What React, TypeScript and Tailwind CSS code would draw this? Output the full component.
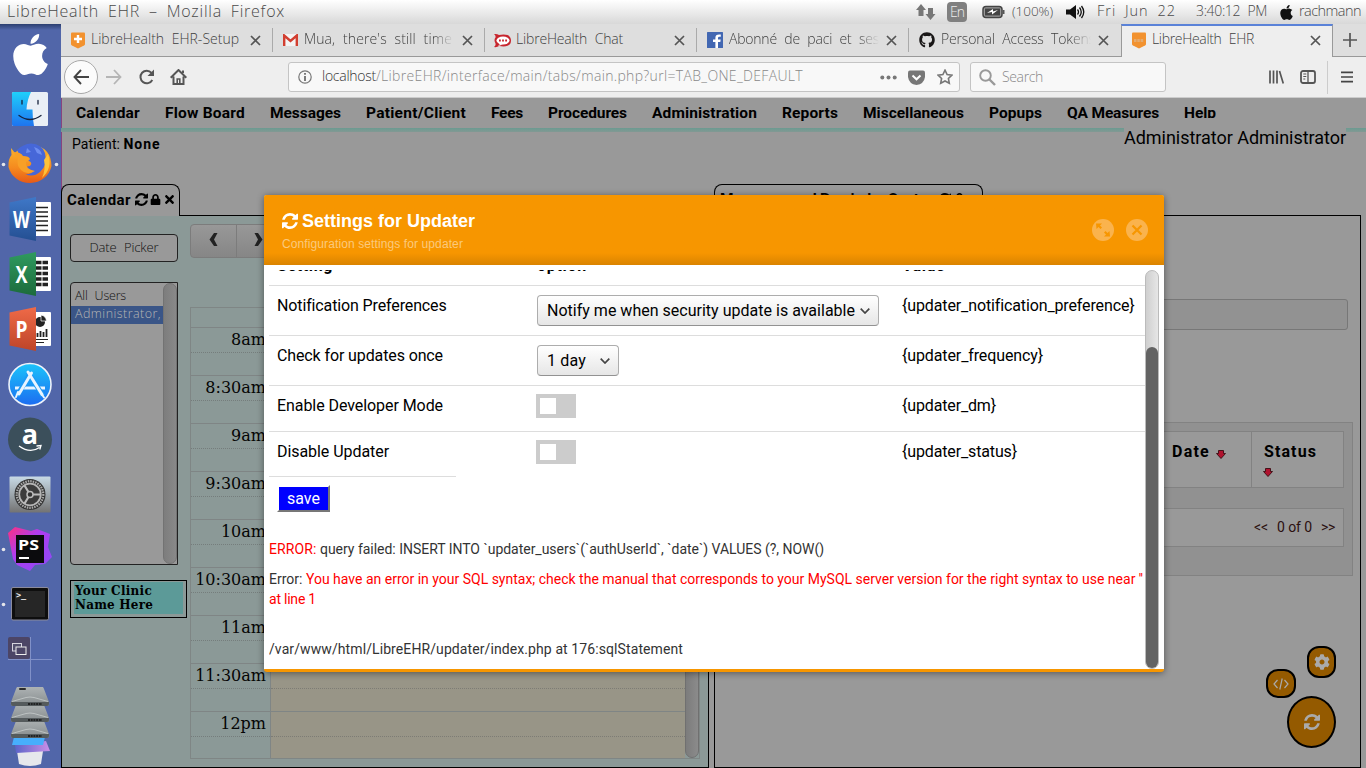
import React, { useLayoutEffect, useRef } from "react";
import { FaApple, FaLock, FaTimes, FaCog, FaGithub } from "react-icons/fa";

/* Text whose letter spacing is adjusted so that it fills the given width. */
function Fit({ w, className = "", children }: { w: number; className?: string; children: string }) {
  const ref = useRef<HTMLSpanElement>(null);
  useLayoutEffect(() => {
    const el = ref.current;
    if (!el) return;
    el.style.letterSpacing = "0px";
    const natural = el.getBoundingClientRect().width;
    el.style.letterSpacing = `${(w - natural) / children.length}px`;
  }, [w, children]);
  return (
    <span ref={ref} className={`inline-block shrink-0 whitespace-pre ${className}`}>
      {children}
    </span>
  );
}

const hand = "font-['Open_Sans','Noto_Sans',sans-serif] font-light [word-spacing:4px]";

function Refresh({ className = "" }: { className?: string }) {
  return (
    <svg viewBox="0 0 1536 1536" fill="currentColor" className={className}>
      <path d="M1511 928q0 5-1 7-64 268-268 434.500t-478 166.500q-146 0-282.500-55t-243.500-157l-129 129q-19 19-45 19t-45-19-19-45v-448q0-26 19-45t45-19h448q26 0 45 19t19 45-19 45l-137 137q71 66 161 102t187 36q134 0 250-65t186-179q11-17 53-117 8-23 30-23h192q13 0 22.500 9.500t9.500 22.500zm25-800v448q0 26-19 45t-45 19h-448q-26 0-45-19t-19-45 19-45l138-138q-148-137-349-137-134 0-250 65t-186 179q-11 17-53 117-8 23-30 23h-199q-13 0-22.500-9.500t-9.500-22.500v-7q65-268 270-434.500t480-166.500q146 0 284 55.500t245 156.500l130-129q19-19 45-19t45 19 19 45z" />
    </svg>
  );
}

function TitleBar() {
  return (
    <header className="flex h-6 shrink-0 items-center bg-gradient-to-b from-white to-[#d8d8d8] pl-[7px] pr-[4px] text-[#4a4a4a]">
      <Fit w={278} className={`${hand} -mt-[2px] text-[16px] leading-6`}>LibreHealth EHR – Mozilla Firefox</Fit>
      <div className="ml-auto flex items-center">
        <svg width="20" height="17" viewBox="0 0 20 17" fill="#777">
          <path d="M5 0l5 6H7.500v6h-5V6H0zM14.500 16l5-6H17V4h-5v6H9.500z" />
        </svg>
        <div className="ml-[11px] flex h-5 w-5 items-center justify-center rounded-sm bg-[#808080] text-[#eee]">
          <Fit w={14} className={`${hand} text-[14px] leading-5`}>En</Fit>
        </div>
        <svg className="ml-[15px]" width="23" height="14" viewBox="0 0 23 14">
          <rect x="1" y="1.500" width="19" height="11" rx="3" fill="#999" stroke="#444" strokeWidth="1.500" />
          <rect x="3" y="3.500" width="15" height="7" fill="#444" />
          <rect x="20.500" y="5" width="2" height="4" fill="#555" />
          <path d="M5 8l6-4v2.500l5-1.500-6 4.500V7z" fill="#fff" />
        </svg>
        <Fit w={41} className={`${hand} -mt-[2px] ml-[7px] text-[13.500px]`}>(100%)</Fit>
        <svg className="ml-[13px]" width="19" height="16" viewBox="0 0 19 16">
          <path d="M0 5.500h4L10 1v14l-6-4.500H0z" fill="#111" />
          <path d="M11.500 5.500q2 2.500 0 5M13.500 3.500q3.500 4.500 0 9M15.500 2q4.500 6 0 12" fill="none" stroke="#111" strokeWidth="1.300" />
        </svg>
        <Fit w={79} className={`${hand} -mt-[3px] ml-[12px] text-[14.500px]`}>Fri Jun 22</Fit>
        <Fit w={71} className={`${hand} -mt-[3px] ml-[20px] text-[14px]`}>3:40:12 PM</Fit>
        <FaApple size={17} color="#111" className="ml-[11px]" />
        <Fit w={62} className={`${hand} -mt-[2px] ml-[4px] mr-px text-[14.500px]`}>rachmann</Fit>
      </div>
    </header>
  );
}

/* ---------- dock ---------- */

function DockSvg({ dots = "", children }: { dots?: string; children: React.ReactNode }) {
  return (
    <svg className="block h-[55px] w-[60px] shrink-0" viewBox="0 0 60 55">
      {children}
      {dots.includes("l") && <circle cx="3.500" cy="27.500" r="1.800" fill="#e5e5ea" />}
      {dots.includes("r") && <circle cx="56.500" cy="27.500" r="1.800" fill="#e5e5ea" />}
    </svg>
  );
}

function OfficeIcon({ letter, from, to, children }: { letter: string; from: string; to: string; children: React.ReactNode }) {
  const id = `office-${letter}`;
  return (
    <DockSvg>
      <defs>
        <linearGradient id={id} x1="0" y1="0" x2="0" y2="1">
          <stop offset="0" stopColor={from} />
          <stop offset="1" stopColor={to} />
        </linearGradient>
      </defs>
      <rect x="34" y="10" width="17" height="34" rx="1" fill="#fff" />
      {children}
      <path d="M9.500 10.500L36 5v44L9.500 43.500z" fill={`url(#${id})`} />
      <text x="21.500" y="36" textAnchor="middle" textLength={letter === "W" ? 17 : 12} lengthAdjust="spacingAndGlyphs" fontSize="24" className="font-['Open_Sans',sans-serif] font-bold" fill="#fff">
        {letter}
      </text>
    </DockSvg>
  );
}

function Dock() {
  return (
    <aside className="flex w-[62px] shrink-0 flex-col border-r border-[#86447f] bg-[#5166a9] bg-gradient-to-b from-[#2c3f70] to-[#5166a9] to-[6px] pt-[3px]">
      <div className="flex h-[55px] w-[60px] shrink-0 items-center justify-center">
        <FaApple size={47} color="#fff" />
      </div>
      <DockSvg>
        <defs>
          <linearGradient id="fnd" x1="0" y1="0" x2="0" y2="1">
            <stop offset="0" stopColor="#1fd0fb" />
            <stop offset="1" stopColor="#1e74f0" />
          </linearGradient>
        </defs>
        <rect x="12" y="10" width="36" height="34" rx="1.500" fill="#e9eff6" />
        <path d="M13.500 10H31q-4 8-4.500 17.500h6q0 9 1.500 16.500H13.500q-1.500 0-1.500-1.500v-31q0-1.500 1.500-1.500z" fill="url(#fnd)" />
        <path d="M22 18.500v3.500M38 18.500v3.500M19 33.500q11 8 22 0" fill="none" stroke="#16223c" strokeWidth="1.300" strokeLinecap="round" />
      </DockSvg>
      <DockSvg dots="lr">
        <defs>
          <linearGradient id="ffx" x1="0" y1="0" x2="0" y2="1">
            <stop offset="0" stopColor="#fbb92d" />
            <stop offset="0.600" stopColor="#f58a1f" />
            <stop offset="1" stopColor="#e65a17" />
          </linearGradient>
        </defs>
        <g transform="translate(0 1)">
          <path d="M11 10l4 5q8-9 19-8 17 3 17.500 21A22 21 0 0 1 8.500 29Q8 21 11.500 17z" fill="url(#ffx)" />
          <path d="M17 12q6-6 14-6.500Q42 6 45 15q3 12-5 19-7 6-15 2 5 1 8-3-6 1-8-4l5-1q3-3-1-5h-6l-3-5z" fill="#4667d8" />
          <path d="M34 9q7 2 8 8l-5-2zM27 10l4 4-5 1z" fill="#6d8df0" />
          <path d="M13 14q8 0 10 4 6 0 7 3-1 2-4 3-1 7 9 9-8 5-14-1-5-5-3-12z" fill="#f8a027" />
          <path d="M48 16q5 14-6 24 4-9 2-18z" fill="#fdc23a" />
        </g>
      </DockSvg>
      <OfficeIcon letter="W" from="#3f78c8" to="#244f92">
        <path d="M36 15.500h12M36 20h12M36 24.500h12M36 29h12M36 33.500h12M36 38.500h12" stroke="#222" strokeWidth="1.300" />
      </OfficeIcon>
      <OfficeIcon letter="X" from="#2f9a5f" to="#1c6b3c">
        <path d="M36 15.500h12M36 21h12M36 26.500h12M36 32h12M36 37.500h12" stroke="#222" strokeWidth="3.600" strokeDasharray="5.500 1" />
      </OfficeIcon>
      <OfficeIcon letter="P" from="#ef6a48" to="#bd4428">
        <circle cx="40" cy="20" r="5" fill="#222" />
        <path d="M41 19v-6q5 1 5.500 6z" fill="#222" stroke="#fff" strokeWidth="0.700" />
        <path d="M37.500 35v-4M40.500 35v-6M43.500 35v-5M46.500 35v-8" stroke="#222" strokeWidth="1.800" />
        <path d="M36 37.500h12M36 40.500h8" stroke="#222" strokeWidth="1.200" />
      </OfficeIcon>
      <DockSvg>
        <defs>
          <linearGradient id="aps" x1="0" y1="0" x2="0" y2="1">
            <stop offset="0" stopColor="#1bc4fb" />
            <stop offset="1" stopColor="#1c6cf0" />
          </linearGradient>
        </defs>
        <circle cx="30" cy="27.500" r="21" fill="url(#aps)" stroke="#eef3fa" strokeWidth="1.600" />
        <path d="M15 31h30" stroke="#e9f4ff" strokeWidth="3" />
        <path d="M28 15L43 39M31 15L17 39" stroke="#1d9af6" strokeWidth="5" />
        <path d="M28 15l14 22.500M31.500 16L19 37" stroke="#e9f4ff" strokeWidth="3" strokeLinecap="round" />
        <path d="M18 35l-2 5M41 36l3 4.500" stroke="#e9f4ff" strokeWidth="2" strokeLinecap="round" />
      </DockSvg>
      <DockSvg>
        <circle cx="30" cy="27.500" r="22" fill="#3b4f5b" />
        <text x="30" y="31.500" textAnchor="middle" fontSize="27" className="font-['Open_Sans',sans-serif] font-bold" fill="#fff">a</text>
        <path d="M19 34q11 8 20.500 1.500M36.500 34l4.500-.500-1.200 4" fill="none" stroke="#fff" strokeWidth="1.300" />
      </DockSvg>
      <DockSvg>
        <defs>
          <linearGradient id="prf" x1="0" y1="0" x2="0" y2="1">
            <stop offset="0" stopColor="#c8dae6" />
            <stop offset="1" stopColor="#737373" />
          </linearGradient>
        </defs>
        <rect x="9.500" y="9.500" width="41" height="36" rx="1" fill="url(#prf)" />
        <circle cx="30" cy="27.500" r="15.500" fill="#333" />
        <circle cx="30" cy="27.500" r="13.300" fill="none" stroke="#aaa" strokeWidth="2.200" strokeDasharray="1.500 1" />
        <circle cx="30" cy="27.500" r="10.800" fill="#3c3c3c" stroke="#b5b5b5" strokeWidth="1.800" />
        <path d="M30 27.500h10M30 27.500l-5.500-9M30 27.500l-5.500 9" stroke="#bbb" strokeWidth="2.200" />
        <circle cx="30" cy="27.500" r="3" fill="#333" stroke="#bbb" strokeWidth="1.500" />
      </DockSvg>
      <DockSvg dots="l">
        <defs>
          <linearGradient id="phs" x1="0" y1="0" x2="1" y2="1">
            <stop offset="0" stopColor="#ff2f7d" />
            <stop offset="0.400" stopColor="#b03df0" />
            <stop offset="1" stopColor="#8a4bf5" />
          </linearGradient>
        </defs>
        <path d="M8 11l7-6 16 4 6-2 13 5-2 13 4 10-7 7-10 1-5 6-13-6-4-6z" fill="url(#phs)" />
        <rect x="16" y="13" width="28" height="28" fill="#0b0b0d" />
        <text x="18" y="27.500" fontSize="14" textLength="21" lengthAdjust="spacingAndGlyphs" className="font-['Open_Sans',sans-serif] font-bold" fill="#fff">PS</text>
        <rect x="19" y="35" width="10" height="2" fill="#fff" />
      </DockSvg>
      <DockSvg dots="l">
        <rect x="11.500" y="10.500" width="37" height="32.500" rx="1.500" fill="#0e0e0e" stroke="#8b8b9c" />
        <rect x="15" y="14" width="30" height="26" fill="#262626" />
        <text x="16" y="21" fontSize="8.500" className="font-['DejaVu_Sans_Mono',monospace] font-bold" fill="#eee">&gt;_</text>
      </DockSvg>
      <DockSvg>
        <rect x="8" y="5" width="22" height="22" rx="2" fill="#4c4566" />
        <path d="M30.500 5V49M8 27.500h44" stroke="#8191c8" />
        <rect x="12.500" y="11.500" width="9" height="7.500" fill="#54506e" stroke="#d6d4de" />
        <rect x="16" y="15" width="10" height="7.500" fill="#4c4566" stroke="#eee" />
      </DockSvg>
      <svg className="block h-[81px] w-[60px] shrink-0" viewBox="0 0 60 81">
        <defs>
          <linearGradient id="drv" x1="0" y1="0" x2="0" y2="1">
            <stop offset="0" stopColor="#b0b5b6" />
            <stop offset="1" stopColor="#858b8d" />
          </linearGradient>
          <linearGradient id="bin" x1="0" y1="0" x2="1" y2="0">
            <stop offset="0" stopColor="#5b63c8" />
            <stop offset="1" stopColor="#c98fe8" />
          </linearGradient>
        </defs>
        <path d="M17 64h26l-2 13q-11 4-22 0z" fill="#e6e7ec" />
        <path d="M15 58l31-4 4 10-34 2z" fill="url(#bin)" />
        <path d="M14 50h31l-2 8H12z" fill="#47aefc" />
        {[32, 16, 0].map((y) => (
          <g key={y} transform={`translate(0 ${y})`}>
            <path d="M16 2q1-3 4-3h20q3 0 4 3l5 13q1 4-2 4H13q-3 0-2-4z" fill="url(#drv)" />
            <path d="M11 15h38v2q0 2-2 2H13q-2 0-2-2z" fill="#555b5d" />
            <path d="M28 17h14" stroke="#111" strokeWidth="1.600" strokeDasharray="2 .700" />
            <path d="M12 14.500l14-4q4-1 8 0l14 4" fill="none" stroke="#c7cbcc" strokeWidth="0.800" />
          </g>
        ))}
        <rect x="19" y="1" width="7" height="2" rx="1" fill="#2b2b2b" />
      </svg>
    </aside>
  );
}

/* ---------- browser chrome ---------- */

function CloseX() {
  return (
    <svg width="11" height="11" viewBox="0 0 11 11" stroke="#555" strokeWidth="1.700">
      <path d="M1 1l9 9M10 1l-9 9" />
    </svg>
  );
}

function Shield({ plus = false }: { plus?: boolean }) {
  return (
    <svg width="14" height="17" viewBox="0 0 14 17" className="shrink-0">
      <path d="M0 1.500Q0 .500 1 .500h12q1 0 1 1V12q0 1-1 1.500l-6 3-6-3Q0 13 0 12z" fill="#f2922f" />
      {plus ? <path d="M7 3v8M3 7h8" stroke="#fff" strokeWidth="2.400" /> : <path d="M2 8.500h10" stroke="#e5ab6e" strokeWidth="3" strokeDasharray="2.500 .800" />}
    </svg>
  );
}

function Tab({ icon, title, w, fade = false, active = false }: { icon: React.ReactNode; title: string; w: number; fade?: boolean; active?: boolean }) {
  return (
    <div
      className={`flex w-[212px] shrink-0 items-center ${
        active ? "h-[33px] border-x border-[#999] border-t-2 border-t-[#5a82d8] bg-[#eee] pb-[2px] pl-[10px] pr-[11px]" : "h-8 pl-[10px] pr-[12px]"
      }`}
    >
      {icon}
      <div className={`-mt-[3px] ml-[6px] flex w-[150px] shrink-0 ${fade ? "[mask-image:linear-gradient(to_right,black_86%,transparent_100%)]" : ""}`}>
        <Fit w={w} className={`${hand} text-[14px] leading-5 text-[#3f3f3f]`}>{title}</Fit>
      </div>
      <div className="ml-auto"><CloseX /></div>
    </div>
  );
}

function TabSep() {
  return <div className="-ml-px h-6 w-px shrink-0 bg-[#aaa]" />;
}

function BrowserChrome() {
  return (
    <>
      <div className="flex h-[33px] shrink-0 items-center border-b border-[#999] bg-[#dedede]">
        <Tab icon={<Shield plus />} title="LibreHealth EHR-Setup" w={148} />
        <TabSep />
        <Tab
          fade
          icon={
            <svg width="15" height="12" viewBox="0 0 15 12" className="shrink-0">
              <rect width="15" height="12" rx="1" fill="#f4f4f4" />
              <path d="M1.200 12V1.500L7.500 7l6.300-5.500V12" fill="none" stroke="#d23f31" strokeWidth="2.400" />
            </svg>
          }
          title="Mua, there's still time"
          w={148}
        />
        <TabSep />
        <Tab
          icon={
            <svg width="17" height="15" viewBox="0 0 17 15" className="-ml-px -mr-px shrink-0">
              <path d="M0 1q3-.500 5 1 12-2 12 5.500T5 13q-2 1.500-5 1 2-1.500 1.500-3.500Q-.500 7 1.500 4.500 2 2.500 0 1z" fill="#c7262e" />
              <ellipse cx="9" cy="7.500" rx="6.500" ry="4" fill="#fff" />
              <path d="M6 11l-2 2 5-1.500" fill="#fff" />
              <path d="M5 7.500h1.800M8.100 7.500h1.800M11.200 7.500H13" stroke="#c7262e" strokeWidth="1.900" />
            </svg>
          }
          title="LibreHealth Chat"
          w={107}
        />
        <TabSep />
        <Tab
          fade
          icon={
            <svg width="16" height="16" viewBox="0 0 16 16" className="shrink-0">
              <rect width="16" height="16" rx="0.500" fill="#4267b2" />
              <path d="M11 16V10h2.300l.400-2.500H11V6q0-1.200 1.300-1.200h1.500V2.600Q8.400 1.800 8.400 5.700v1.800H6V10h2.400v6z" fill="#fff" />
            </svg>
          }
          title="Abonné de paci et ses"
          w={150}
        />
        <TabSep />
        <Tab fade icon={<FaGithub size={16} color="#191717" className="shrink-0" />} title="Personal Access Tokens" w={154} />
        <Tab active icon={<Shield />} title="LibreHealth EHR" w={102} />
        <div className="flex flex-1 items-center justify-center">
          <svg width="14" height="14" viewBox="0 0 14 14" stroke="#555" strokeWidth="1.700"><path d="M7 0v14M0 7h14" /></svg>
        </div>
      </div>

      <div className="flex h-[41px] shrink-0 items-center border-b border-[#ccc] bg-[#eee] pl-[3px]">
        <div className="flex h-[34px] w-[34px] items-center justify-center rounded-full border border-[#a8a8a8] bg-[#fbfbfb]">
          <svg width="16" height="16" viewBox="0 0 16 16" fill="none" stroke="#444" strokeWidth="1.900"><path d="M16 8H1.500M8 1L1.500 8 8 15" /></svg>
        </div>
        <svg className="ml-[8px]" width="16" height="16" viewBox="0 0 16 16" fill="none" stroke="#b5b5b5" strokeWidth="1.800"><path d="M0 8h14.500M8 1l6.500 7L8 15" /></svg>
        <svg className="ml-[16px]" width="17" height="16" viewBox="0 0 17 16"><path d="M13.500 3.800A6.300 6.300 0 1 0 14.300 11" fill="none" stroke="#555" strokeWidth="2" /><path d="M9.500 7H16V.500z" fill="#555" /></svg>
        <svg className="ml-[15px]" width="17" height="16" viewBox="0 0 17 16" fill="none" stroke="#555" strokeWidth="2"><path d="M.700 8.700L8.500 1l7.800 7.700M3.500 7.500V15h10V7.500M13 1.500V4" /><path d="M7.200 14.500V10h2.600v4.500" strokeWidth="1.600" /></svg>
        <div className="ml-[101px] flex h-[30px] w-[672px] shrink-0 items-center rounded-[3px] border border-[#c4c4c4] bg-[#f8f8f8] pl-[9px] pr-[6px]">
          <svg width="14" height="14" viewBox="0 0 14 14"><circle cx="7" cy="7" r="6.200" fill="none" stroke="#777" strokeWidth="1.200" /><path d="M7 3v1.800M7 6v5" stroke="#666" strokeWidth="1.700" /></svg>
          <Fit w={54} className={`${hand} -mt-[2px] ml-[10px] text-[14px] leading-7 text-[#333]`}>localhost</Fit>
          <Fit w={427} className={`${hand} -mt-[2px] text-[14px] leading-7 text-[#888]`}>/LibreEHR/interface/main/tabs/main.php?url=TAB_ONE_DEFAULT</Fit>
          <svg className="ml-auto" width="17" height="5" viewBox="0 0 17 5" fill="#777"><circle cx="2.300" cy="2.500" r="2" /><circle cx="8.500" cy="2.500" r="2" /><circle cx="14.700" cy="2.500" r="2" /></svg>
          <svg className="ml-[11px]" width="17" height="15" viewBox="0 0 17 15"><path d="M2 .500h13q2 0 2 2V7q-1 7-8.500 8Q1 14 0 7V2.500Q0 .500 2 .500z" fill="#777" /><path d="M4.500 5.500l4 3.800 4-3.800" fill="none" stroke="#fff" strokeWidth="2" /></svg>
          <svg className="ml-[12px]" width="16" height="16" viewBox="0 0 16 16"><path d="M8 1.200l2.100 4.400 4.800.600-3.500 3.300.900 4.800L8 12l-4.300 2.300.900-4.800L1.100 6.200l4.800-.600z" fill="none" stroke="#777" strokeWidth="1.600" /></svg>
        </div>
        <div className="ml-[10px] flex h-[30px] w-[196px] shrink-0 items-center rounded-[3px] border border-[#c4c4c4] bg-[#f8f8f8] pl-[8px]">
          <svg width="17" height="17" viewBox="0 0 17 17" fill="none" stroke="#999" strokeWidth="1.900"><circle cx="6.500" cy="6.500" r="5.300" /><path d="M10.500 10.500l5.500 5.500" strokeWidth="2.400" /></svg>
          <Fit w={41} className={`${hand} -mt-px ml-[6px] text-[14px] leading-7 text-[#888]`}>Search</Fit>
        </div>
        <svg className="ml-[103px]" width="15" height="14" viewBox="0 0 15 14" stroke="#555" strokeWidth="1.700"><path d="M1 .500v13M4.500 .500v13M8 .500v13M10.500 1l3.800 12.500" /></svg>
        <svg className="ml-[16px]" width="16" height="14" viewBox="0 0 16 14" fill="none" stroke="#555"><rect x="1" y="1" width="14" height="12" rx="2" strokeWidth="1.800" /><path d="M8 1v12" strokeWidth="1.300" /><path d="M3.300 4h3M3.300 6.500h3M3.300 9h2" /></svg>
        <div className="ml-[11px] h-[33px] w-px bg-[#ccc]" />
        <svg className="ml-[13px]" width="12" height="12" viewBox="0 0 12 12" stroke="#444" strokeWidth="1.700"><path d="M0 1.300h12M0 6h12M0 10.700h12" /></svg>
      </div>
    </>
  );
}

/* ---------- page ---------- */

const menu: [string, number][] = [
  ["Calendar", 64], ["Flow Board", 80], ["Messages", 71], ["Patient/Client", 100], ["Fees", 32], ["Procedures", 79],
  ["Administration", 105], ["Reports", 56], ["Miscellaneous", 101], ["Popups", 53], ["QA Measures", 92], ["Help", 32],
];

const slots = ["8am", "8:30am", "9am", "9:30am", "10am", "10:30am", "11am", "11:30am", "12pm"];

function CalendarPanel() {
  return (
    <section className="flex w-[648px] shrink-0 flex-col">
      <div className="z-10 -mb-px flex h-8 w-[119px] shrink-0 items-center rounded-t-[8px] border border-b-0 border-black bg-[#999] pb-[2px] pl-[5px]">
        <Fit w={64} className="text-[15px] font-bold leading-4">Calendar</Fit>
        <Refresh className="ml-[4px] h-[13px] w-[13px]" />
        <FaLock size={11} className="ml-[2px]" />
        <FaTimes size={13} className="ml-[2px]" />
      </div>
      <div className="flex min-h-0 flex-1 overflow-hidden border border-black bg-[#8b9997]">
        <div className="flex w-[128px] shrink-0 flex-col pl-[8px] pt-[18px]">
          <div className="flex h-7 w-[108px] shrink-0 items-center justify-center rounded-[4px] border border-[#222] bg-[#999]">
            <Fit w={69} className={`${hand} -mt-px text-[13px] text-[#111]`}>Date Picker</Fit>
          </div>
          <div className="mt-[20px] flex h-[283px] w-[108px] shrink-0 rounded-l-[4px] border border-[#222] bg-[#999]">
            <div className="w-[92px]">
              <div className="h-[23px] pl-[4px]"><Fit w={51} className={`${hand} text-[12.500px] leading-[25px] text-[#111]`}>All Users</Fit></div>
              <div className="flex h-[18px] items-center bg-[#3a5587] pl-[4px]"><Fit w={86} className={`${hand} -mt-[2px] text-[12.500px] leading-[16px] text-[#b5b5b5]`}>Administrator,</Fit></div>
            </div>
            <div className="w-[14px] rounded-full border border-[#737373] bg-gradient-to-r from-[#7d7d7d] to-[#898989]" />
          </div>
          <div className="mt-[15px] flex h-[38px] w-[117px] shrink-0 border border-black p-[3px] pt-[1px]">
            <div className="h-[32px] flex-1 bg-[#5c9a98] pl-px pt-[2px] font-['DejaVu_Serif',serif] text-[12px] font-bold leading-[14px]">
              <div><Fit w={77}>Your Clinic</Fit></div>
              <div><Fit w={78}>Name Here</Fit></div>
            </div>
          </div>
        </div>
        <div className="flex w-[510px] flex-col pt-[8px]">
          <div className="flex h-[34px] w-[92px] shrink-0 rounded-[4px] border border-[#7c7c7c] bg-gradient-to-b from-[#989898] to-[#868686] text-[#222]">
            <div className="flex flex-1 items-center justify-center border-r border-[#7c7c7c] pb-[4px]">
              <svg width="9" height="13" viewBox="0 0 9 13" fill="currentColor"><path d="M5 0h3.500L5 6.500 8.500 13H5L.500 6.500z" /></svg>
            </div>
            <div className="flex flex-1 items-center justify-center pb-[4px]">
              <svg width="9" height="13" viewBox="0 0 9 13" fill="currentColor"><path d="M4 0H.500L4 6.500.500 13H4l4.500-6.500z" /></svg>
            </div>
          </div>
          <div className="mt-[49px] flex h-[452px] w-[510px] shrink-0 flex-col border border-[#7f8685]">
            <div className="h-[19px] shrink-0" />
            <div className="flex min-h-0 flex-1">
              <div className="w-[495px] overflow-hidden">
                {slots.map((s) => (
                  <div key={s} className="flex h-[48px] border-t border-[#7f8585]">
                    <div className="w-[80px] shrink-0 border-r border-[#7f8585]">
                      <div className="h-[25px] border-b border-dotted border-[#757d7c] pr-[4px] text-right font-['DejaVu_Serif',serif] text-[16px] leading-[24px] text-[#050505]">{s}</div>
                    </div>
                    <div className="flex-1 bg-[#989587]">
                      <div className="h-[25px] border-b border-dotted border-[#7d7c75]" />
                    </div>
                  </div>
                ))}
              </div>
              <div className="w-[14px] rounded-full border border-[#707070] bg-gradient-to-r from-[#7c7c7c] to-[#8b8b8b]" />
            </div>
          </div>
        </div>
      </div>
    </section>
  );
}

function RedArrow() {
  return (
    <svg width="10" height="9" viewBox="0 0 10 9"><path d="M2.500.500h5v3h2L5 8.500.500 3.500h2z" fill="#b0122e" stroke="#3a0b12" strokeWidth="0.900" /></svg>
  );
}

function MessagesPanel() {
  return (
    <section className="ml-[5px] flex w-[647px] shrink-0 flex-col">
      <div className="z-10 -mb-px flex h-8 w-[269px] shrink-0 items-center rounded-t-[8px] border border-b-0 border-black bg-[#999] pb-[4px] pl-[5px]">
        <Fit w={212} className="text-[15.500px] font-bold leading-4">Messages and Reminder Center</Fit>
        <Refresh className="ml-[7px] h-[12px] w-[12px]" />
        <FaLock size={11} className="ml-[3px]" />
      </div>
      <div className="flex min-h-0 flex-1 flex-col border border-black pl-[12px] pr-[7px] pt-[83px]">
        <div className="mr-[5px] h-[31px] shrink-0 rounded-[3px] border border-[#777] bg-[#929292]" />
        <div className="mt-[92px] flex h-[154px] shrink-0 flex-col border border-[#828282] bg-[#919191] pl-2 pr-[8px] pt-[8px]">
          <div className="flex h-[57px] shrink-0 border border-[#828282] bg-[#999] text-black">
            <div className="ml-auto flex w-[89px] items-start border-r border-[#828282] pl-[9px] pt-[8px]">
              <Fit w={38} className="text-[16px] font-bold leading-6">Date</Fit>
              <div className="ml-[6px] pt-[10px]"><RedArrow /></div>
            </div>
            <div className="w-[91px] pl-[12px] pt-[8px]">
              <Fit w={53} className="block text-[16px] font-bold leading-6">Status</Fit>
              <div className="-ml-px pt-[4px]"><RedArrow /></div>
            </div>
          </div>
          <div className="mt-[20px] flex h-[39px] shrink-0 items-center justify-end border border-[#828282] bg-[#999] pr-[8px] text-[14px] text-[#2b1010]">
            <Fit w={14} className="text-[14px]">&lt;&lt;</Fit>
            <Fit w={35} className="ml-[9px]">0 of 0</Fit>
            <Fit w={14} className="ml-[9px] text-[14px]">&gt;&gt;</Fit>
          </div>
        </div>
      </div>
    </section>
  );
}

function Select({ text, w, className }: { text: string; w: number; className: string }) {
  return (
    <div className={`flex h-[31px] items-center justify-between rounded-[4px] border border-[#adadad] border-b-[#929292] bg-gradient-to-b from-white to-[#e6e6e6] pl-[9px] pr-[8px] ${className}`}>
      <Fit w={w}>{text}</Fit>
      <svg width="10" height="6" viewBox="0 0 10 6" fill="none" stroke="#444" strokeWidth="1.700"><path d="M.700.700L5 5 9.300.700" /></svg>
    </div>
  );
}

function Toggle() {
  return (
    <div className="-ml-px h-6 w-10 bg-[#ccc] p-1">
      <div className="h-4 w-4 bg-white" />
    </div>
  );
}

function Row({ label, lw, value, vw, className, children }: { label: string; lw: number; value: string; vw: number; className: string; children: React.ReactNode }) {
  return (
    <div className={`flex shrink-0 border-b border-[#ddd] pl-2 ${className}`}>
      <div className="w-[260px] shrink-0 pt-[10px] leading-[20px]"><Fit w={lw}>{label}</Fit></div>
      <div className="w-[365px] shrink-0">{children}</div>
      <div className="pt-[10px] leading-[20px]"><Fit w={vw}>{value}</Fit></div>
    </div>
  );
}

function UpdaterModal() {
  return (
    <div className="absolute left-[264px] top-[195px] z-30 flex h-[477px] w-[900px] flex-col overflow-hidden rounded-[3px] border-b-[3px] border-[#f79600] bg-white shadow-[0_1px_7px_rgba(0,0,0,0.45)]">
      <div className="flex h-[70px] shrink-0 items-center bg-[#f79600] bg-gradient-to-t from-[#da8400] to-[#f79600] to-[12px] pl-[18px] pr-[16px] font-['Liberation_Sans',Arial,sans-serif]">
        <div className="pt-[3px]">
          <div className="flex h-[22px] items-center pt-[2px] text-white">
            <Refresh className="mr-[4px] h-[16px] w-[16px]" />
            <Fit w={173} className="text-[18px] font-bold leading-[22px]">Settings for Updater</Fit>
          </div>
          <Fit w={181} className="block text-[12px] leading-[12px] pt-px pb-[3px] text-[#fbc97d]">Configuration settings for updater</Fit>
        </div>
        <div className="ml-auto flex gap-[12px]">
          <svg width="22" height="22" viewBox="0 0 22 22">
            <circle cx="11" cy="11" r="11" fill="#fab34d" />
            <path d="M4 4.500h6L8 6.500l2 2L8.500 10l-2-2L4.500 10zM18 17.500h-6l2-2-2-2 1.500-1.500 2 2 2-2z" fill="#f79600" />
          </svg>
          <svg width="22" height="22" viewBox="0 0 22 22">
            <circle cx="11" cy="11" r="11" fill="#fab34d" />
            <path d="M6.500 6.500l9 9M15.500 6.500l-9 9" stroke="#f79600" strokeWidth="2.200" />
          </svg>
        </div>
      </div>
      <div className="flex min-h-0 flex-1 pl-[5px] pr-[5px] pt-[5px]">
        <div className="flex w-[876px] shrink-0 flex-col overflow-hidden text-[16px] text-black">
          <div className="h-[16px] shrink-0 overflow-hidden border-b border-[#ddd]">
            <div className="-mt-[14px] flex pl-2 font-bold leading-[20px]">
              <div className="w-[260px]"><Fit w={56}>Setting</Fit></div>
              <div className="w-[365px]"><Fit w={50}>option</Fit></div>
              <Fit w={43}>Value</Fit>
            </div>
          </div>
          <Row className="h-[50px]" label="Notification Preferences" lw={169} value="{updater_notification_preference}" vw={232}>
            <div className="pt-[9px]"><Select className="w-[342px]" w={308} text="Notify me when security update is available" /></div>
          </Row>
          <Row className="h-[50px]" label="Check for updates once" lw={166} value="{updater_frequency}" vw={141}>
            <div className="pt-[9px]"><Select className="w-[82px]" w={39} text="1 day" /></div>
          </Row>
          <Row className="h-[46px]" label="Enable Developer Mode" lw={166} value="{updater_dm}" vw={94}>
            <div className="pt-[8px]"><Toggle /></div>
          </Row>
          <Row className="h-[44px] border-b-0" label="Disable Updater" lw={112} value="{updater_status}" vw={115}>
            <div className="pt-[8px]"><Toggle /></div>
          </Row>
          <div className="h-px w-[187px] shrink-0 bg-[#ddd]" />
          <div className="ml-[8px] mt-[8px] flex h-[27px] w-[53px] shrink-0 items-center justify-center border-2 border-l-white border-t-white border-b-[#777] border-r-[#777] bg-[#00f] text-white">
            <Fit w={33}>save</Fit>
          </div>
          <div className="mt-[27px] shrink-0 text-[14px] leading-[20px] text-[#333]">
            <p className="mb-[10px] whitespace-nowrap">
              <Fit w={51} className="text-[red]">ERROR: </Fit>
              <Fit w={504}>{"query failed: INSERT INTO `updater_users`(`authUserId`, `date`) VALUES (?, NOW()"}</Fit>
            </p>
            <p className="whitespace-nowrap">
              <Fit w={37}>Error: </Fit>
              <Fit w={837} className="text-[red]">You have an error in your SQL syntax; check the manual that corresponds to your MySQL server version for the right syntax to use near ''</Fit>
            </p>
            <p className="mb-[30px] text-[red]"><Fit w={47}>at line 1</Fit></p>
            <p><Fit w={414}>/var/www/html/LibreEHR/updater/index.php at 176:sqlStatement</Fit></p>
          </div>
        </div>
        <div className="h-full w-[14px] rounded-full border border-[#bbb] bg-gradient-to-r from-[#cfcfcf] to-[#e6e6e6] pt-[76px]">
          <div className="h-full rounded-full bg-[#636363]" />
        </div>
      </div>
    </div>
  );
}

function FloatingButtons() {
  return (
    <>
      <div className="absolute left-[1307px] top-[646px] z-20 flex h-8 w-[29px] items-center justify-center rounded-[12px] border-2 border-black bg-[#945a00] text-[#aaa]">
        <FaCog size={16} />
      </div>
      <div className="absolute left-[1266px] top-[669px] z-20 flex h-[29px] w-[30px] items-center justify-center rounded-[12px] border-2 border-black bg-[#945a00] text-[#aaa]">
        <svg width="16" height="12" viewBox="0 0 16 12" fill="none" stroke="currentColor" strokeWidth="1.200"><path d="M4.500 2L1 6l3.500 4M11.500 2L15 6l-3.500 4M9.200.500L6.800 11.500" /></svg>
      </div>
      <div className="absolute left-[1287px] top-[696px] z-20 flex h-[52px] w-[49px] items-center justify-center rounded-[50%] border-2 border-black bg-[#945a00] text-[#aaa]">
        <Refresh className="h-4 w-4" />
      </div>
    </>
  );
}

export default function App() {
  return (
    <div className="relative flex h-[768px] w-[1366px] flex-col overflow-hidden bg-[#999] font-[Roboto,sans-serif] text-black">
      <TitleBar />
      <div className="flex min-h-0 flex-1">
        <Dock />
        <main className="-ml-px flex min-w-0 flex-1 flex-col">
          <BrowserChrome />
          <nav className="flex h-[30px] shrink-0 items-center gap-[25px] pb-[1px] pl-[15px] text-[15.500px] font-bold leading-5">
            {menu.map(([label, w]) => (
              <Fit key={label} w={w}>{label}</Fit>
            ))}
          </nav>
          <div className="h-[4px] shrink-0 bg-gradient-to-b from-[#6b9b91] to-[#829993]" />
          <div className="h-[52px] shrink-0 pl-[11px] pt-[2px] text-[14px] leading-5">
            <Fit w={48}>Patient:</Fit> <Fit w={37} className="font-bold">None</Fit>
          </div>
          <div className="flex min-h-0 flex-1">
            <CalendarPanel />
            <MessagesPanel />
          </div>
        </main>
      </div>
      <div className="absolute left-[1124px] top-[118px] h-8 w-[222px] bg-[#999] text-[18px] leading-[40px]">
        <Fit w={222}>Administrator Administrator</Fit>
      </div>
      <FloatingButtons />
      <UpdaterModal />
    </div>
  );
}
